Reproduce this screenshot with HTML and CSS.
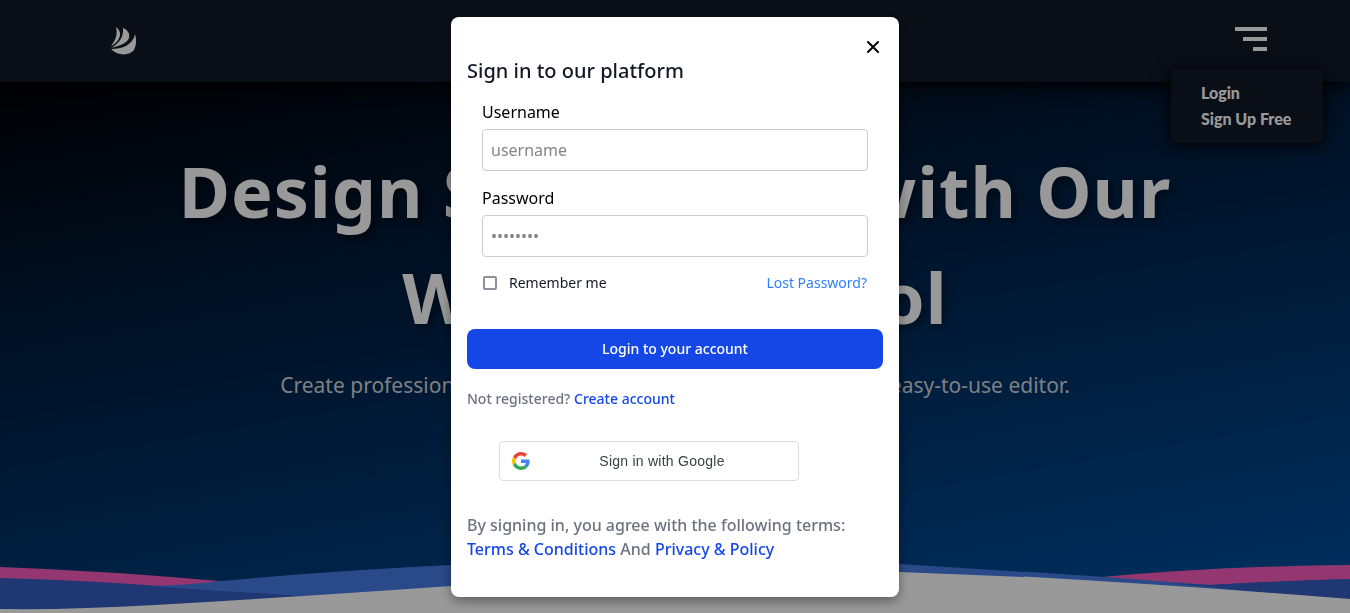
FILE: index.html
```html
<!DOCTYPE html>
<html lang="en">
<head>
<meta charset="utf-8">
<meta name="viewport" content="width=device-width, initial-scale=1">
<title>Sign in</title>
<link rel="stylesheet" href="styles.css">
</head>
<body>
<div class="page">
  <header class="navbar">
    <a class="logo" href="#" aria-label="Home">
      <svg width="28" height="30" viewBox="0 0 28 30" fill="#fff" aria-hidden="true">
        <path d="M7 1C10 3 11.500 6 11 9C10.500 14 6 18 2 20C6 15 9 9 7 1Z"/>
        <path d="M14 2C19 4 21 8 20 12C18 18 9 20 2 22C9 18 15 12 14 2Z"/>
        <path d="M26 8C28 14 27 20 25 24C21 29 10 31 2 23C13 23 24 19 26 8Z"/>
      </svg>
    </a>
    <div class="menu">
      <button class="menu-toggle" type="button" aria-label="Menu">
        <span class="bar bar-long"></span>
        <span class="bar bar-mid"></span>
        <span class="bar bar-short"></span>
      </button>
      <nav class="menu-list">
        <a href="#">Login</a>
        <a href="#">Sign Up Free</a>
      </nav>
    </div>
  </header>
  <main class="hero">
    <div class="hero-text">
      <h1>Design Seamlessly with Our<br>Wireframe Tool</h1>
      <p>Create professional wireframes in minutes with our powerful, easy-to-use editor.</p>
    </div>
    <svg class="waves" viewBox="0 0 1350 56" preserveAspectRatio="none" aria-hidden="true">
      <path fill="#f75dbb" d="M0 10Q110 14 230 25L230 56H0ZM1090 21Q1220 9 1350 8V56H1090Z"/>
      <path fill="#345dbe" d="M0 21Q80 23 160 29L310 40V56H0ZM1180 28L1210 28Q1280 24 1350 22V56H1180Z"/>
      <path fill="#467be3" d="M150 29Q190 28 222 24Q340 13 451 8Q680 -5 899 7L1024 15V14.500L1105 20L1210 28L1350 42V56H310L296 39Z"/>
      <path fill="#345dbe" d="M1210 28Q1280 24 1350 22V44L1170 26Z"/>
      <path fill="#fff" d="M0 52Q70 53 155 48Q310 39 451 29Q680 9 899 15L1024 20V19.500Q1190 29 1350 42V56H0Z"/>
    </svg>
  </main>
</div>

<div class="overlay">
  <section class="modal" role="dialog" aria-modal="true" aria-labelledby="modal-title">
    <button class="close" type="button" aria-label="Close">
      <svg width="20" height="20" viewBox="0 0 20 20" fill="none" stroke="#000" stroke-width="2" stroke-linecap="round" aria-hidden="true">
        <path d="M5 5L15 15M15 5L5 15"/>
      </svg>
    </button>
    <h2 id="modal-title">Sign in to our platform</h2>
    <form>
      <div class="fields">
        <div class="field">
          <label for="username">Username</label>
          <input id="username" type="text" placeholder="username">
        </div>
        <div class="field">
          <label for="password">Password</label>
          <input id="password" type="password" placeholder="••••••••">
        </div>
        <div class="options">
          <input id="remember" type="checkbox">
          <label for="remember">Remember me</label>
          <a href="#">Lost Password?</a>
        </div>
      </div>
      <button class="submit" type="submit">Login to your account</button>
    </form>
    <p class="register">Not registered? <a href="#">Create account</a></p>
    <button class="google" type="button">
      <svg width="18" height="18" viewBox="0 0 48 48" aria-hidden="true">
        <path fill="#EA4335" d="M24 9.500c3.540 0 6.710 1.220 9.210 3.600l6.850-6.850C35.900 2.380 30.470 0 24 0 14.620 0 6.510 5.380 2.560 13.220l7.980 6.190C12.430 13.720 17.740 9.500 24 9.500z"/>
        <path fill="#4285F4" d="M46.980 24.550c0-1.570-.15-3.090-.38-4.550H24v9.020h12.940c-.58 2.960-2.260 5.480-4.780 7.180l7.730 6c4.510-4.180 7.090-10.360 7.090-17.650z"/>
        <path fill="#FBBC05" d="M10.530 28.590c-.48-1.450-.76-2.990-.76-4.590s.27-3.140.76-4.590l-7.980-6.190C.92 16.460 0 20.120 0 24c0 3.880.92 7.540 2.560 10.780l7.970-6.190z"/>
        <path fill="#34A853" d="M24 48c6.480 0 11.930-2.130 15.890-5.810l-7.730-6c-2.150 1.450-4.920 2.300-8.160 2.300-6.260 0-11.570-4.220-13.470-9.910l-7.980 6.190C6.510 42.620 14.620 48 24 48z"/>
      </svg>
      <span>Sign in with Google</span>
    </button>
    <p class="terms">By signing in, you agree with the following terms:<br><a href="#">Terms &amp; Conditions</a> And <a href="#">Privacy &amp; Policy</a></p>
  </section>
</div>
</body>
</html>
```
FILE: styles.css
```css
* {
  box-sizing: border-box;
  margin: 0;
}

body {
  font-family: "Noto Sans", sans-serif;
  font-size: 16px;
  line-height: 24px;
  color: #000;
}

a {
  text-decoration: none;
}

button {
  font: inherit;
  border: 0;
  cursor: pointer;
}

.page {
  display: flex;
  flex-direction: column;
  min-height: 100vh;
  background: linear-gradient(170deg, #000 6%, #00234a 48%, #0052a4 100%);
}

.navbar {
  display: flex;
  align-items: center;
  justify-content: space-between;
  padding: 26px 83px 26px 109px;
  background: #111827;
  box-shadow: 0 4px 16px #000;
}

.logo {
  display: flex;
}

.menu {
  position: relative;
}

.menu-toggle {
  display: flex;
  flex-direction: column;
  align-items: flex-end;
  gap: 6px;
  padding: 0 0 4px;
  background: none;
}

.bar {
  height: 4px;
  background: #fff;
}

.bar-long {
  width: 32px;
}

.bar-mid {
  width: 24px;
}

.bar-short {
  width: 14px;
}

.menu-list {
  position: absolute;
  top: 42px;
  right: -56px;
  display: grid;
  gap: 2px;
  width: 152px;
  padding: 12px 0 12px 30px;
  background: #111827;
  box-shadow: 0 2px 14px #000;
  font-family: Lato, sans-serif;
  font-weight: 900;
  white-space: nowrap;
}

.menu-list a {
  color: #fff;
}

.hero {
  flex: 1;
  display: flex;
  flex-direction: column;
  justify-content: space-between;
  text-align: center;
}

.hero-text {
  padding: 56px 16px 0;
}

.hero h1 {
  margin-bottom: 19px;
  font-size: 70px;
  line-height: 106px;
  letter-spacing: 1px;
  color: #fff;
  text-shadow: 4px 4px 8px rgba(0, 0, 0, 0.4);
}

.hero p {
  font-size: 21px;
  line-height: 32px;
  color: #d1d5db;
}

.waves {
  display: block;
  width: 100%;
  height: 56px;
}

.overlay {
  position: fixed;
  inset: 0;
  display: flex;
  align-items: center;
  justify-content: center;
  background: rgba(0, 0, 0, 0.4);
}

.modal {
  display: flex;
  flex-direction: column;
  width: 100%;
  max-width: 448px;
  padding: 20px 16px 36px;
  border-radius: 8px;
  background: #fff;
  box-shadow: 0 4px 12px rgba(0, 0, 0, 0.4);
}

.close {
  align-self: flex-end;
  display: flex;
  padding: 0;
  background: none;
}

.modal h2 {
  margin-bottom: 15px;
  font-size: 20px;
  font-weight: 500;
  line-height: 28px;
  color: #111827;
}

.fields {
  display: grid;
  gap: 15px;
  padding: 0 15px;
}

.field {
  display: grid;
  gap: 5px;
}

.field input {
  width: 100%;
  height: 42px;
  padding: 0 8px;
  border: 1px solid #ccc;
  border-radius: 4px;
  background: #fff;
  font: inherit;
}

.field input::placeholder {
  color: #858585;
  opacity: 1;
}

.options {
  display: flex;
  align-items: center;
  padding: 0 1px;
  font-size: 14px;
  line-height: 22px;
  color: #111827;
}

.options input {
  appearance: none;
  width: 14px;
  height: 14px;
  margin: 0 12px 0 0;
  border: 2px solid #8f8f9d;
  border-radius: 2px;
  background: #fff;
}

.options a {
  margin-left: auto;
  color: #2f80ff;
}

.submit {
  width: 100%;
  margin-top: 35px;
  padding: 10px 20px;
  border-radius: 8px;
  background: #1447e6;
  color: #fff;
  font-size: 14px;
  font-weight: 500;
  line-height: 20px;
}

.register,
.terms {
  font-weight: 500;
  color: #6b7280;
}

.register {
  margin-top: 20px;
  font-size: 14px;
  line-height: 20px;
}

.register a,
.terms a {
  color: #1447e6;
}

.google {
  display: flex;
  align-items: center;
  width: 300px;
  height: 40px;
  margin: 32px 32px;
  padding: 0 12px;
  border: 1px solid #dadce0;
  border-radius: 4px;
  background: #fff;
  color: #3c4043;
  font-family: "Liberation Sans", Arial, sans-serif;
  font-size: 14px;
  letter-spacing: 0.25px;
}

.google span {
  flex: 1;
  padding-left: 8px;
}
```
